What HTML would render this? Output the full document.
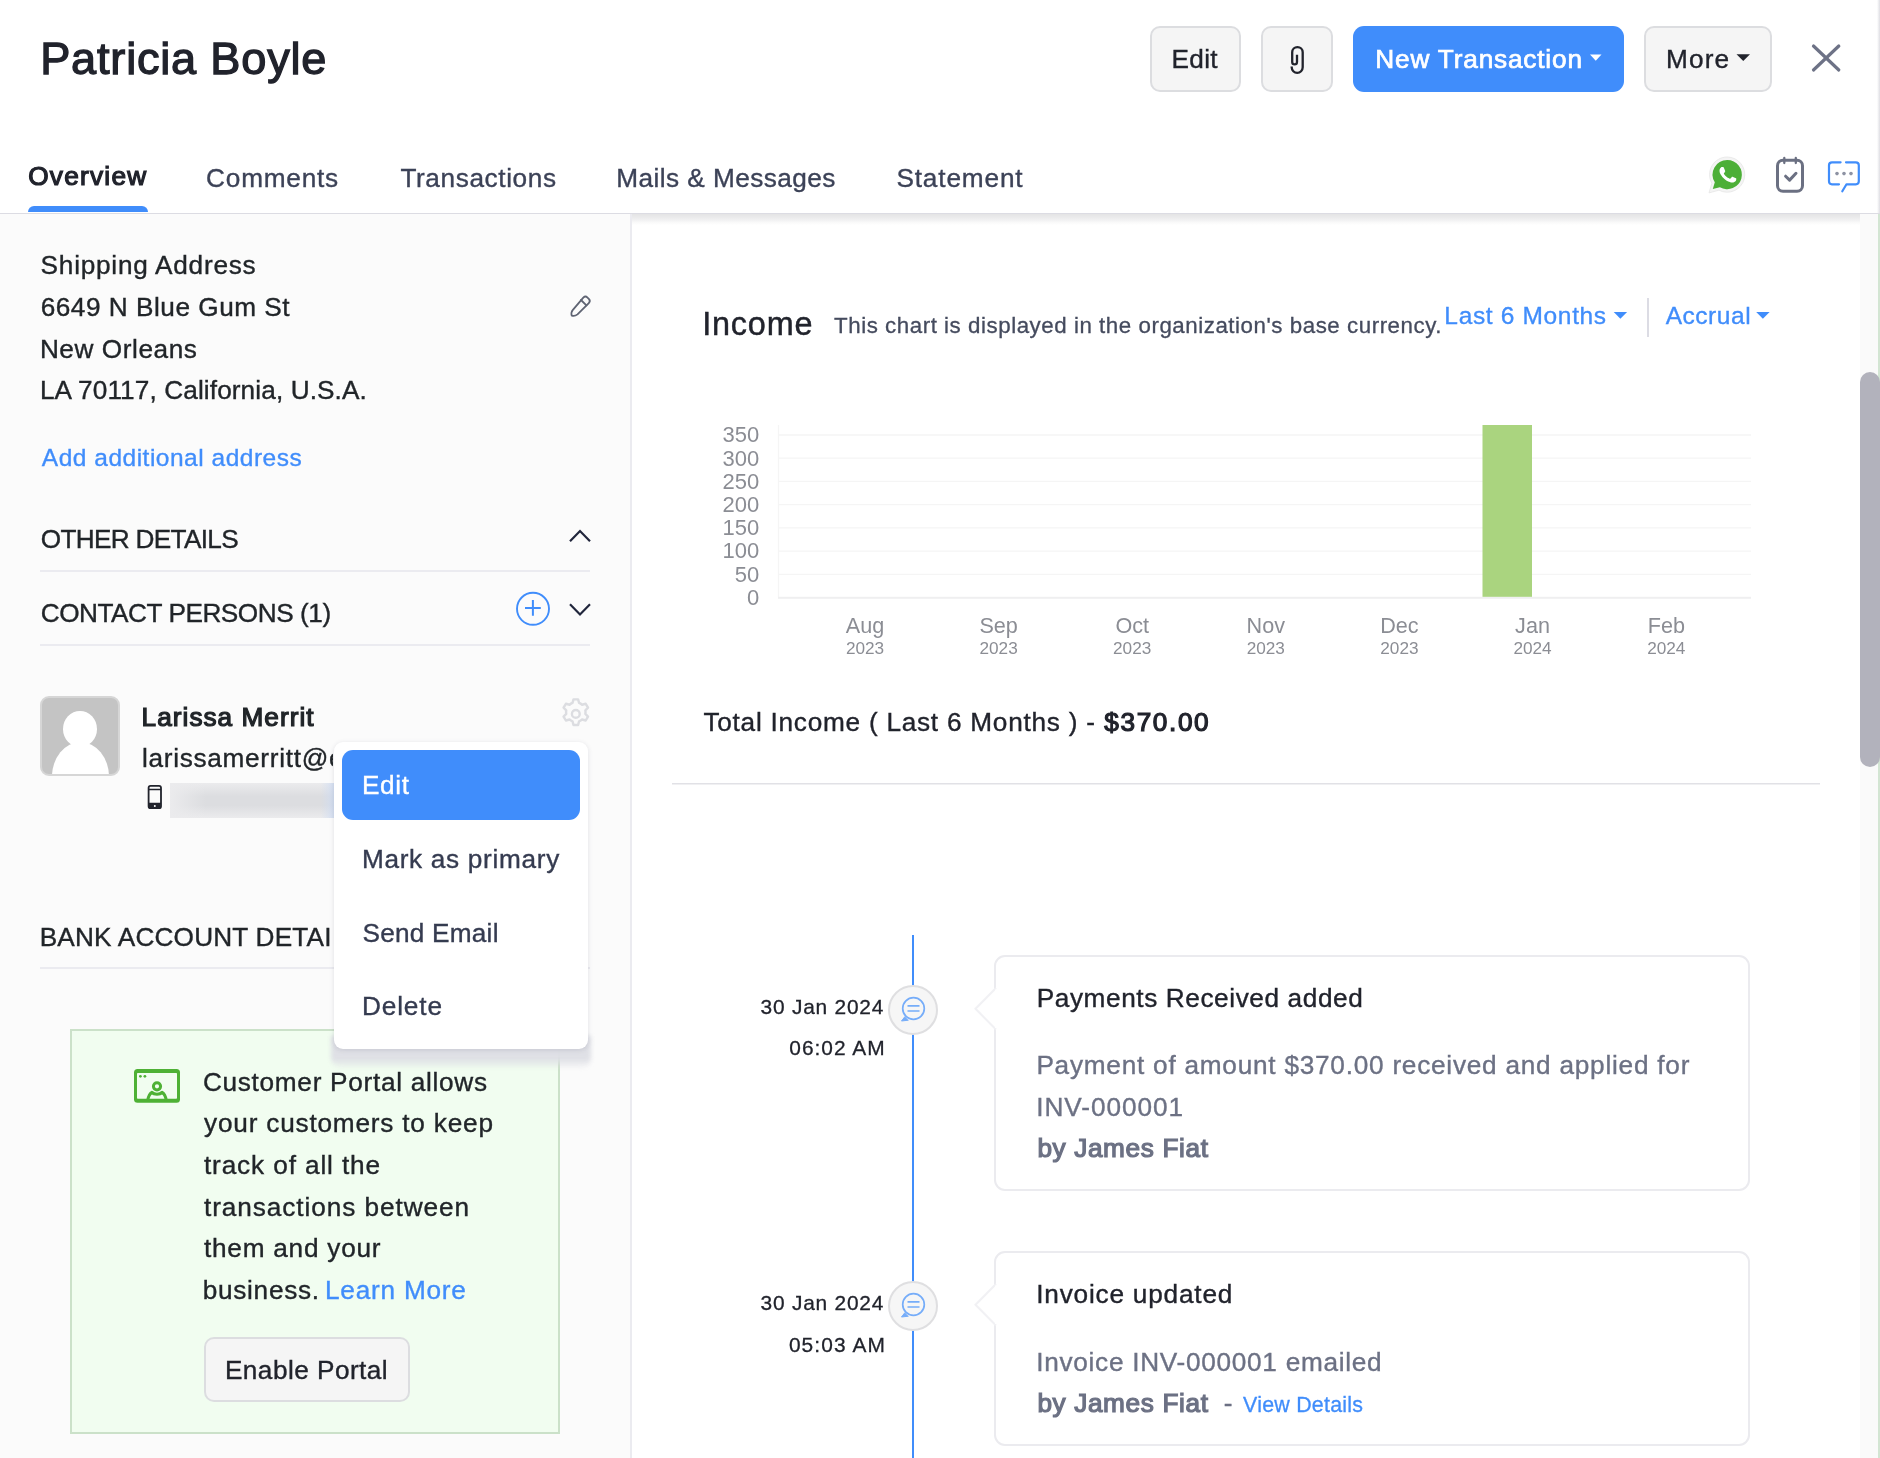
<!DOCTYPE html>
<html lang="en"><head><meta charset="utf-8"><title>Patricia Boyle</title>
<style>
html,body{margin:0;padding:0}
body{width:1880px;height:1458px;overflow:hidden;position:relative;background:#fff;font-family:"Liberation Sans",sans-serif;color:#21263c}
.t{position:absolute;white-space:nowrap;line-height:1;z-index:5}
.a{position:absolute;box-sizing:border-box}
svg{position:absolute;overflow:visible}
.btn{background:#f5f5f5;border:2px solid #dcdde0;border-radius:10px}
.sep{height:2px;background:#ebebf0;left:40px;width:550px}
.card{left:994px;width:756px;border:2px solid #ebebef;border-radius:11px;background:#fff}

</style></head>
<body>
<!-- panels -->
<div class="a" style="left:0;top:214px;width:632px;height:1244px;background:#fbfbfb;border-right:2px solid #ebebf0"></div>
<div class="a" style="left:632px;top:214px;width:1228px;height:11px;background:linear-gradient(#e4e4e5 0,#eaeaeb 3px,#f1f1f2 6px,#f8f8f8 8px,#fff 11px)"></div>
<div class="a" style="left:0;top:213px;width:1880px;height:1px;background:#dcdce3"></div>
<div class="a" style="left:28px;top:206px;width:120px;height:6px;background:#408dfb;border-radius:6px 6px 0 0"></div>
<!-- right edge / scrollbar -->
<div class="a" style="left:1877px;top:0;width:3px;height:213px;background:linear-gradient(90deg,#fff,#dedee3)"></div>
<div class="a" style="left:1860px;top:214px;width:20px;height:1244px;background:#fafafa"></div>
<div class="a" style="left:1878px;top:214px;width:2px;height:1244px;background:#d3e5d3"></div>
<div class="a" style="left:1860px;top:372px;width:20px;height:395px;background:#b2b2bc;border-radius:10px"></div>

<!-- header buttons -->
<div class="a btn" style="left:1150px;top:26px;width:91px;height:66px"></div>
<div class="a btn" style="left:1261px;top:26px;width:72px;height:66px"></div>
<div class="a" style="left:1353px;top:26px;width:271px;height:66px;background:#408dfb;border-radius:11px"></div>
<div class="a btn" style="left:1644px;top:26px;width:128px;height:66px"></div>
<svg style="left:0;top:0" width="1880" height="214">
  <path d="M1297 54.7V62A2.4 2.4 0 0 1 1292.2 62V52.3A5.25 5.25 0 0 1 1302.7 52.3V67.3A5.5 5.5 0 0 1 1291.7 67.3V66.6" fill="none" stroke="#21232c" stroke-width="2.3" stroke-linecap="butt"/>
  <path d="M1590 54.5h11.5l-5.75 6.2z" fill="#fff"/>
  <path d="M1736.5 54.3h13.5l-6.75 6.6z" fill="#21232c"/>
  <path d="M1813.5 46L1838.8 70M1838.8 46L1813.5 70" stroke="#6d7286" stroke-width="3.2" stroke-linecap="round" fill="none"/>
  <!-- whatsapp -->
  <g>
    <path d="M1727.2 157a17.6 17.6 0 0 0-15.3 26.3l-2.9 9.6 10-2.7a17.6 17.6 0 1 0 8.2-33.2z" fill="#f4f4f4" stroke="#e6e6e6" stroke-width="0.8"/>
    <path d="M1727.2 160a14.6 14.6 0 0 0-12.4 22.3l-2 6.8 7.1-1.9a14.6 14.6 0 1 0 7.3-27.2z" fill="#4caf37"/>
    <path d="M1721.6 166.4c-.5-1-1-1-1.5-1h-1.2c-.5 0-1.200.2-1.800.9-.600.700-2.300 2.300-2.300 5.500 0 3.200 2.400 6.400 2.700 6.800.300.400 4.600 7.300 11.400 10 5.600 2.200 6.800 1.800 8 1.700 1.200-.1 3.900-1.600 4.500-3.100.500-1.600.500-2.900.400-3.100-.2-.3-.6-.4-1.300-.8-.700-.300-3.900-1.900-4.500-2.200-.600-.2-1-.300-1.500.300-.400.700-1.700 2.200-2.100 2.600-.400.400-.800.500-1.400.2-.700-.300-2.800-1-5.400-3.300-2-1.800-3.300-4-3.700-4.600-.400-.700 0-1 .300-1.400.300-.300.700-.800 1-1.200.300-.400.400-.700.700-1.100.200-.400.100-.800-.1-1.200-.2-.300-1.400-3.600-2-4.900z" fill="#fff" transform="translate(1727.2 174.5) scale(0.62) translate(-1727.2 -177.5)"/>
  </g>
  <!-- clipboard check -->
  <rect x="1777.5" y="160.3" width="25" height="31" rx="5.5" fill="none" stroke="#6b7082" stroke-width="3"/>
  <path d="M1784.3 158v5M1795.8 158v5" stroke="#6b7082" stroke-width="2.3" stroke-linecap="round"/>
  <path d="M1785.6 176.2l4 3.900 6.400-6.800" fill="none" stroke="#6b7082" stroke-width="3" stroke-linecap="round" stroke-linejoin="round"/>
  <!-- chat -->
  <path d="M1840.6 162.300H1832a3 3 0 0 0-3 3v16a3 3 0 0 0 3 3h7M1846 162.300h9.800a3 3 0 0 1 3 3v16a3 3 0 0 1-3 3H1846.500l-4.200 7" fill="none" stroke="#408dfb" stroke-width="2.200" stroke-linecap="round" stroke-linejoin="round"/>
  <circle cx="1837" cy="173.6" r="1.800" fill="#8d92a3"/><circle cx="1844" cy="173.6" r="1.800" fill="#8d92a3"/><circle cx="1851" cy="173.6" r="1.800" fill="#8d92a3"/>
</svg>

<!-- left panel icons -->
<svg style="left:0;top:214px;z-index:10" width="632" height="1244" viewBox="0 214 632 1244">
  <!-- pencil -->
  <g fill="none" stroke="#5f6473" stroke-width="1.800" stroke-linejoin="round" stroke-linecap="round">
    <path d="M583.300 297.600a3 3 0 0 1 4.200 0l1.300 1.300a3 3 0 0 1 0 4.200L577.500 314.400c-1.500 1.200-4.200 1.700-5.800 1.200-.5-1.600 0-4.300 1.200-5.800z"/>
    <path d="M581 300l5.400 5.400"/>
  </g>
  <!-- chevrons -->
  <path d="M570 541.200L580 531l10 10.200" fill="none" stroke="#21263c" stroke-width="2.200"/>
  <path d="M570 604.300L580 614.500l10-10.200" fill="none" stroke="#21263c" stroke-width="2.200"/>
  <!-- plus circle -->
  <circle cx="533" cy="608.800" r="16" fill="none" stroke="#408dfb" stroke-width="1.900"/>
  <path d="M525 607.900h15.800M532.900 600v15.800" stroke="#408dfb" stroke-width="2" fill="none"/>
  <!-- gear -->
  <g transform="translate(575.8 713.9) scale(1.08)" fill="none" stroke="#dcdde1" stroke-width="2.200" stroke-linejoin="round">
    <path d="M-2.100 -13.200h4.200l.9 3.300a10 10 0 0 1 2.700 1.600l3.300-.9 2.100 3.600-2.400 2.400a10 10 0 0 1 0 3.200l2.400 2.400-2.100 3.600-3.300-.9a10 10 0 0 1-2.700 1.600l-.9 3.300h-4.200l-.9-3.300a10 10 0 0 1-2.700-1.600l-3.300.9-2.100-3.600 2.400-2.400a10 10 0 0 1 0-3.200l-2.400-2.400 2.100-3.600 3.300.9a10 10 0 0 1 2.700-1.600z" transform="scale(1.020)"/>
    <circle cx="0" cy="0" r="3.600"/>
  </g>
  <!-- phone -->
  <rect x="148.600" y="785.800" width="12.400" height="22.400" rx="2" fill="none" stroke="#21232c" stroke-width="1.800"/>
  <path d="M148.600 789.500h12.400M148.600 803.500h12.400" stroke="#21232c" stroke-width="1.400"/>
  <rect x="149" y="803.500" width="11.600" height="4.500" fill="#21232c"/>
  <circle cx="154.800" cy="805.900" r="1" fill="#fff"/>
  <!-- portal icon -->
  <rect x="134" y="1069" width="46" height="33.700" rx="3.500" fill="#4eb135"/>
  <rect x="137" y="1073" width="40" height="25.800" rx="0.800" fill="#f1fdf0"/>
  <g fill="none" stroke="#4eb135" stroke-width="3" stroke-linejoin="round">
    <circle cx="157" cy="1086.300" r="3.600"/>
    <path d="M147.600 1100.500c.900-4.700 2.600-7.300 4.300-8.200 2.200 2.700 8 2.700 10.200 0 1.700.9 3.400 3.500 4.300 8.200"/>
  </g>
  <circle cx="140.400" cy="1076.300" r="1.400" fill="#4eb135"/><circle cx="144.900" cy="1076.300" r="1.400" fill="#4eb135"/>
</svg>

<!-- separators -->
<div class="a sep" style="top:570px"></div>
<div class="a sep" style="top:644px"></div>
<div class="a sep" style="top:967px"></div>

<!-- avatar -->
<div class="a" style="left:40px;top:696px;width:80px;height:80px;background:#c4c4c4;border:2px solid #d6d6d6;border-radius:9px;overflow:hidden">
  <div class="a" style="left:21px;top:13px;width:34px;height:36px;border-radius:50%;background:#fff"></div>
  <div class="a" style="left:10px;top:44px;width:57px;height:70px;border-radius:50%;background:#fff"></div>
</div>
<!-- blurred phone -->
<div class="a" style="left:170px;top:783px;width:164px;height:35px;background:linear-gradient(90deg,#ebebed 0,rgba(235,235,237,0) 22%,rgba(235,235,237,0) 92%,rgba(205,220,245,.7) 100%),linear-gradient(#ebebed,#dcdde0 38%,#dcdde0 64%,#ebebed)"></div>

<!-- portal box -->
<div class="a" style="left:70px;top:1029px;width:490px;height:405px;background:#f1fdf0;border:2px solid #cbe1c9"></div>
<div class="a btn" style="left:204px;top:1337px;width:206px;height:65px;border-radius:10px"></div>

<!-- dropdown -->
<div class="a" style="left:331px;top:1036px;width:260px;height:33px;z-index:19;border-radius:0 0 12px 12px;background:linear-gradient(rgba(222,223,229,1) 0,rgba(222,223,229,.96) 70%,rgba(224,225,231,0) 100%);filter:blur(2px)"></div>
<div class="a" style="left:334px;top:742px;width:254px;height:307px;background:#fff;border-radius:9px;z-index:20;box-shadow:0 1px 5px rgba(60,60,90,.14)"></div>
<div class="a" style="left:342px;top:750px;width:238px;height:70px;background:#408dfb;border-radius:11px;z-index:21"></div>

<!-- income header bits -->
<svg style="left:632px;top:280px;will-change:transform" width="1228" height="520" viewBox="632 280 1228 520">
  <path d="M1613.700 312h13.400l-6.700 6.800z" fill="#408dfb"/>
  <path d="M1756.200 312h13.400l-6.700 6.800z" fill="#408dfb"/>
  <rect x="1647" y="298" width="2" height="39" fill="#dcdce4"/>
  <!-- chart -->
  <g stroke="#f5f5f5" stroke-width="1.3">
    <path d="M778 435H1751M778 458.200H1751M778 481.400H1751M778 504.600H1751M778 527.900H1751M778 551.100H1751M778 574.300H1751"/>
    <path d="M778.500 425V597" stroke="#f5f5f5"/>
  </g>
  <rect x="778" y="596.8" width="973" height="2" fill="#efeff0"/>
  <rect x="1482.500" y="425" width="49.500" height="171.800" fill="#aad47f"/>
  <g font-family="'Liberation Sans',sans-serif" font-size="22" fill="#8b8d94" text-anchor="end">
    <text x="759.3" y="442.4">350</text><text x="759.3" y="465.6">300</text><text x="759.3" y="488.8">250</text><text x="759.3" y="512.0">200</text><text x="759.3" y="535.2">150</text><text x="759.3" y="558.4">100</text><text x="759.3" y="581.7">50</text><text x="759.3" y="604.9">0</text>
  </g>
  <g font-family="'Liberation Sans',sans-serif" font-size="21.6" fill="#8b8d94" text-anchor="middle">
    <text x="865" y="632.8">Aug</text><text x="998.600" y="632.8">Sep</text><text x="1132.200" y="632.8">Oct</text><text x="1265.800" y="632.8">Nov</text><text x="1399.400" y="632.8">Dec</text><text x="1532.500" y="632.8">Jan</text><text x="1666.300" y="632.8">Feb</text>
  </g>
  <g font-family="'Liberation Sans',sans-serif" font-size="17.2" fill="#8b8d94" text-anchor="middle">
    <text x="865" y="653.9">2023</text><text x="998.600" y="653.9">2023</text><text x="1132.200" y="653.9">2023</text><text x="1265.800" y="653.9">2023</text><text x="1399.400" y="653.9">2023</text><text x="1532.500" y="653.9">2024</text><text x="1666.300" y="653.9">2024</text>
  </g>
  <rect x="672" y="783" width="1148" height="1.500" fill="#e1e1e6"/>
</svg>

<!-- timeline -->
<div class="a" style="left:912px;top:935px;width:2px;height:523px;background:#408dfb"></div>
<div class="a card" style="top:955px;height:236px"></div>
<div class="a card" style="top:1251px;height:195px"></div>
<svg style="left:860px;top:935px" width="200" height="523" viewBox="860 935 200 523">
  <g>
    <path d="M996 988L975.500 1008.800L996 1029.500" fill="#fff" stroke="#f1f1f4" stroke-width="2"/>
    <rect x="995" y="989.500" width="3" height="38.500" fill="#fff"/>
    <circle cx="913" cy="1010" r="24" fill="#f6f6f6" stroke="#dfdfe1" stroke-width="2"/>
    <g fill="none" stroke="#76adf9" stroke-width="1.7">
      <circle cx="913.500" cy="1008.500" r="10.800"/>
      <path d="M907.500 1005.800h12M907.500 1011h12"/>
      <path d="M905 1016.500l-3.500 4.500 7-.8" fill="#76adf9" stroke-width="1"/>
    </g>
  </g>
  <g transform="translate(0 296)">
    <path d="M996 988L975.500 1008.800L996 1029.500" fill="#fff" stroke="#f1f1f4" stroke-width="2"/>
    <rect x="995" y="989.500" width="3" height="38.500" fill="#fff"/>
    <circle cx="913" cy="1010" r="24" fill="#f6f6f6" stroke="#dfdfe1" stroke-width="2"/>
    <g fill="none" stroke="#76adf9" stroke-width="1.7">
      <circle cx="913.500" cy="1008.500" r="10.800"/>
      <path d="M907.500 1005.800h12M907.500 1011h12"/>
      <path d="M905 1016.500l-3.500 4.500 7-.8" fill="#76adf9" stroke-width="1"/>
    </g>
  </g>
</svg>

<!-- text -->
<div class="a" style="left:0;top:0;width:1880px;height:1458px;z-index:40;will-change:transform">
<span class="t" style="left:40.20px;top:35.90px;font-size:45.2px;font-weight:400;color:#21232c;letter-spacing:0.769px;-webkit-text-stroke:1.27px #21232c;">Patricia Boyle</span>
<span class="t" style="left:1171.50px;top:45.90px;font-size:26.2px;font-weight:400;color:#21232c;letter-spacing:0.313px;-webkit-text-stroke:0.37px #21232c;">Edit</span>
<span class="t" style="left:1375.35px;top:45.90px;font-size:26.2px;font-weight:400;color:#ffffff;letter-spacing:0.828px;-webkit-text-stroke:0.73px #ffffff;">New Transaction</span>
<span class="t" style="left:1666.10px;top:45.90px;font-size:26.2px;font-weight:400;color:#21232c;letter-spacing:1.106px;-webkit-text-stroke:0.37px #21232c;">More</span>
<span class="t" style="left:28.25px;top:162.90px;font-size:26.2px;font-weight:400;color:#21232c;letter-spacing:1.253px;-webkit-text-stroke:1.23px #21232c;">Overview</span>
<span class="t" style="left:206.11px;top:164.90px;font-size:26.2px;font-weight:400;color:#3c4257;letter-spacing:0.780px;-webkit-text-stroke:0.37px #3c4257;">Comments</span>
<span class="t" style="left:400.40px;top:164.90px;font-size:26.2px;font-weight:400;color:#3c4257;letter-spacing:0.608px;-webkit-text-stroke:0.37px #3c4257;">Transactions</span>
<span class="t" style="left:616.20px;top:164.90px;font-size:26.2px;font-weight:400;color:#3c4257;letter-spacing:0.453px;-webkit-text-stroke:0.37px #3c4257;">Mails &amp; Messages</span>
<span class="t" style="left:896.41px;top:164.90px;font-size:26.2px;font-weight:400;color:#3c4257;letter-spacing:0.852px;-webkit-text-stroke:0.37px #3c4257;">Statement</span>
<span class="t" style="left:40.61px;top:251.90px;font-size:26.2px;font-weight:400;color:#212529;letter-spacing:0.747px;-webkit-text-stroke:0.37px #212529;">Shipping Address</span>
<span class="t" style="left:40.73px;top:293.90px;font-size:26.2px;font-weight:400;color:#212529;letter-spacing:0.511px;-webkit-text-stroke:0.37px #212529;">6649 N Blue Gum St</span>
<span class="t" style="left:39.90px;top:335.90px;font-size:26.2px;font-weight:400;color:#212529;letter-spacing:0.560px;-webkit-text-stroke:0.37px #212529;">New Orleans</span>
<span class="t" style="left:39.90px;top:376.90px;font-size:26.2px;font-weight:400;color:#212529;letter-spacing:0.104px;-webkit-text-stroke:0.37px #212529;">LA 70117, California, U.S.A.</span>
<span class="t" style="left:41.83px;top:446.25px;font-size:24.5px;font-weight:400;color:#408dfb;letter-spacing:0.506px;-webkit-text-stroke:0.34px #408dfb;">Add additional address</span>
<span class="t" style="left:40.77px;top:525.90px;font-size:26.2px;font-weight:400;color:#212529;letter-spacing:-0.690px;-webkit-text-stroke:0.37px #212529;">OTHER DETAILS</span>
<span class="t" style="left:40.71px;top:599.90px;font-size:26.2px;font-weight:400;color:#212529;letter-spacing:-0.464px;-webkit-text-stroke:0.37px #212529;">CONTACT PERSONS (1)</span>
<span class="t" style="left:141.61px;top:703.90px;font-size:26.2px;font-weight:400;color:#212529;letter-spacing:1.025px;-webkit-text-stroke:1.23px #212529;">Larissa Merrit</span>
<span class="t" style="left:141.96px;top:744.90px;font-size:26.2px;font-weight:400;color:#212529;letter-spacing:0.704px;width:191.54px;overflow:hidden;-webkit-text-stroke:0.37px #212529;">larissamerritt@e</span>
<span class="t" style="left:39.70px;top:923.90px;font-size:26.2px;font-weight:400;color:#212529;letter-spacing:0.186px;width:293.80px;overflow:hidden;-webkit-text-stroke:0.37px #212529;">BANK ACCOUNT DETAILS</span>
<span class="t" style="left:361.90px;top:771.90px;font-size:26.2px;font-weight:400;color:#ffffff;letter-spacing:0.665px;-webkit-text-stroke:0.37px #ffffff;">Edit</span>
<span class="t" style="left:361.90px;top:845.90px;font-size:26.2px;font-weight:400;color:#353b50;letter-spacing:0.692px;-webkit-text-stroke:0.37px #353b50;">Mark as primary</span>
<span class="t" style="left:362.61px;top:919.90px;font-size:26.2px;font-weight:400;color:#353b50;letter-spacing:0.216px;-webkit-text-stroke:0.37px #353b50;">Send Email</span>
<span class="t" style="left:361.90px;top:992.90px;font-size:26.2px;font-weight:400;color:#353b50;letter-spacing:0.887px;-webkit-text-stroke:0.37px #353b50;">Delete</span>
<span class="t" style="left:202.91px;top:1068.90px;font-size:26.2px;font-weight:400;color:#212529;letter-spacing:0.707px;-webkit-text-stroke:0.37px #212529;">Customer Portal allows</span>
<span class="t" style="left:204.04px;top:1109.90px;font-size:26.2px;font-weight:400;color:#212529;letter-spacing:0.798px;-webkit-text-stroke:0.37px #212529;">your customers to keep</span>
<span class="t" style="left:203.95px;top:1151.90px;font-size:26.2px;font-weight:400;color:#212529;letter-spacing:0.874px;-webkit-text-stroke:0.37px #212529;">track of all the</span>
<span class="t" style="left:203.95px;top:1193.90px;font-size:26.2px;font-weight:400;color:#212529;letter-spacing:0.928px;-webkit-text-stroke:0.37px #212529;">transactions between</span>
<span class="t" style="left:203.95px;top:1234.90px;font-size:26.2px;font-weight:400;color:#212529;letter-spacing:0.771px;-webkit-text-stroke:0.37px #212529;">them and your</span>
<span class="t" style="left:202.70px;top:1276.90px;font-size:26.2px;font-weight:400;color:#212529;letter-spacing:0.717px;-webkit-text-stroke:0.37px #212529;">business.</span>
<span class="t" style="left:325.00px;top:1276.90px;font-size:26.2px;font-weight:400;color:#408dfb;letter-spacing:0.774px;-webkit-text-stroke:0.37px #408dfb;">Learn More</span>
<span class="t" style="left:224.90px;top:1356.90px;font-size:26.2px;font-weight:400;color:#21232c;letter-spacing:0.464px;-webkit-text-stroke:0.37px #21232c;">Enable Portal</span>
<span class="t" style="left:702.16px;top:307.80px;font-size:32.4px;font-weight:400;color:#21232c;letter-spacing:0.819px;-webkit-text-stroke:0.45px #21232c;">Income</span>
<span class="t" style="left:834.04px;top:315.35px;font-size:22.3px;font-weight:400;color:#454b5e;letter-spacing:0.546px;-webkit-text-stroke:0.31px #454b5e;">This chart is displayed in the organization's base currency.</span>
<span class="t" style="left:1444.37px;top:304.25px;font-size:24.5px;font-weight:400;color:#408dfb;letter-spacing:0.656px;-webkit-text-stroke:0.34px #408dfb;">Last 6 Months</span>
<span class="t" style="left:1665.63px;top:304.25px;font-size:24.5px;font-weight:400;color:#408dfb;letter-spacing:0.547px;-webkit-text-stroke:0.34px #408dfb;">Accrual</span>
<span class="t" style="left:703.40px;top:708.90px;font-size:26.2px;font-weight:400;color:#21232c;letter-spacing:0.751px;-webkit-text-stroke:0.37px #21232c;">Total Income ( Last 6 Months ) -</span>
<span class="t" style="left:1104.32px;top:708.90px;font-size:26.2px;font-weight:400;color:#21232c;letter-spacing:1.617px;-webkit-text-stroke:1.23px #21232c;">$370.00</span>
<span class="t" style="left:760.52px;top:997.05px;font-size:20.9px;font-weight:400;color:#21232c;letter-spacing:0.787px;-webkit-text-stroke:0.29px #21232c;">30 Jan 2024</span>
<span class="t" style="left:789.32px;top:1038.05px;font-size:20.9px;font-weight:400;color:#21232c;letter-spacing:1.002px;-webkit-text-stroke:0.29px #21232c;">06:02 AM</span>
<span class="t" style="left:760.52px;top:1293.05px;font-size:20.9px;font-weight:400;color:#21232c;letter-spacing:0.787px;-webkit-text-stroke:0.29px #21232c;">30 Jan 2024</span>
<span class="t" style="left:788.92px;top:1335.05px;font-size:20.9px;font-weight:400;color:#21232c;letter-spacing:1.091px;-webkit-text-stroke:0.29px #21232c;">05:03 AM</span>
<span class="t" style="left:1036.70px;top:984.90px;font-size:26.2px;font-weight:400;color:#21232c;letter-spacing:0.595px;-webkit-text-stroke:0.37px #21232c;">Payments Received added</span>
<span class="t" style="left:1036.40px;top:1051.90px;font-size:26.2px;font-weight:400;color:#6c7184;letter-spacing:0.758px;-webkit-text-stroke:0.37px #6c7184;">Payment of amount $370.00 received and applied for</span>
<span class="t" style="left:1036.23px;top:1093.90px;font-size:26.2px;font-weight:400;color:#6c7184;letter-spacing:0.961px;-webkit-text-stroke:0.37px #6c7184;">INV-000001</span>
<span class="t" style="left:1037.39px;top:1134.90px;font-size:26.2px;font-weight:400;color:#6c7184;letter-spacing:0.630px;-webkit-text-stroke:1.23px #6c7184;">by James Fiat</span>
<span class="t" style="left:1036.23px;top:1280.90px;font-size:26.2px;font-weight:400;color:#21232c;letter-spacing:0.799px;-webkit-text-stroke:0.37px #21232c;">Invoice updated</span>
<span class="t" style="left:1036.23px;top:1348.90px;font-size:26.2px;font-weight:400;color:#6c7184;letter-spacing:0.715px;-webkit-text-stroke:0.37px #6c7184;">Invoice INV-000001 emailed</span>
<span class="t" style="left:1037.39px;top:1389.90px;font-size:26.2px;font-weight:400;color:#6c7184;letter-spacing:0.630px;-webkit-text-stroke:1.23px #6c7184;">by James Fiat</span>
<span class="t" style="left:1223.68px;top:1389.90px;font-size:26.2px;font-weight:400;color:#6c7184;letter-spacing:0.000px;-webkit-text-stroke:0.37px #6c7184;">-</span>
<span class="t" style="left:1243.09px;top:1395.30px;font-size:21.4px;font-weight:400;color:#408dfb;letter-spacing:0.230px;-webkit-text-stroke:0.30px #408dfb;">View Details</span>
</div>
</body></html>
